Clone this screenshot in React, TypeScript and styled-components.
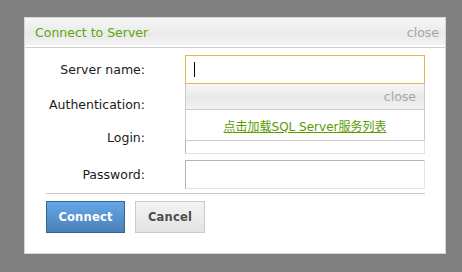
import React from "react";
import styled, { createGlobalStyle } from "styled-components";

const Global = createGlobalStyle`
  html, body { margin: 0; padding: 0; background: #808080; }
  body { font-family: "DejaVu Sans", Verdana, sans-serif; }
  * { box-sizing: border-box; }
`;

const Page = styled.div`
  width: 462px;
  height: 272px;
  padding: 17px 0 0 24px;
  background: #808080;
`;

const Dialog = styled.div`
  width: 422px;
  height: 237px;
  background: #fff;
  border: 1px solid #d6d6d6;
  display: flex;
  flex-direction: column;
`;

const Header = styled.div`
  height: 30px;
  display: flex;
  align-items: center;
  justify-content: space-between;
  padding: 0 6px 1px 10px;
  background: linear-gradient(#f6f6f6 0%, #eaeaea 55%, #f4f4f4 100%);
  box-shadow: inset 0 -2px 0 #fff;
  border-bottom: 1px solid #cdcdcd;
`;

const Title = styled.span`
  color: #5ea60c;
  font-size: 12.5px;
`;

const CloseText = styled.span`
  color: #a6a6a6;
  font-size: 12.5px;
`;

const Body = styled.div`
  padding: 7px 19px 0 21px;
  display: flex;
  flex-direction: column;
`;

const Form = styled.div`
  display: grid;
  grid-template-columns: 99px 240px;
  column-gap: 40px;
  row-gap: 6px;
  align-items: center;
`;

const Label = styled.div<{ $raised?: boolean }>`
  text-align: right;
  font-size: 12.5px;
  color: #1a1a1a;
  margin-bottom: ${(p) => (p.$raised ? "5px" : "0")};
`;

const Field = styled.div<{ $focused?: boolean }>`
  position: relative;
  height: 29px;
  display: flex;
  align-items: center;
  padding-left: 8px;
  background: #fff;
  border: 1px solid;
  border-color: ${(p) =>
    p.$focused ? "#e6b457" : "#b4b4b4 #e4e4e4 #e4e4e4 #b4b4b4"};
`;

const Caret = styled.span`
  display: block;
  width: 1px;
  height: 15px;
  background: #000;
`;

const Popup = styled.div`
  position: absolute;
  top: 28px;
  left: -1px;
  width: 240px;
  border: 1px solid #cacaca;
  border-top: none;
  background: #fff;
  z-index: 2;
`;

const PopupHeader = styled.div`
  height: 26px;
  display: flex;
  align-items: center;
  justify-content: flex-end;
  padding: 0 8px 0 0;
  background: linear-gradient(#f7f7f7 0%, #e9e9e9 55%, #f3f3f3 100%);
  border-bottom: 1px solid #cacaca;
`;

const PopupBody = styled.div`
  height: 30px;
  display: flex;
  align-items: center;
  justify-content: center;
`;

const LoadLink = styled.a`
  color: #5a9c00;
  font-size: 12px;
  font-family: "DejaVu Sans", "Noto Sans CJK SC", sans-serif;
  text-decoration: underline;
  cursor: pointer;
`;

const Separator = styled.div`
  height: 1px;
  background: #cbcbcb;
  margin: 4px 1px 0 0;
`;

const Buttons = styled.div`
  display: flex;
  gap: 10px;
  margin-top: 7px;
`;

const Button = styled.button<{ $primary?: boolean }>`
  height: 32px;
  width: ${(p) => (p.$primary ? "79px" : "70px")};
  font-family: "DejaVu Sans", Verdana, sans-serif;
  font-size: 11.5px;
  font-weight: bold;
  padding: 0;
  border: 1px solid ${(p) => (p.$primary ? "#2f6b88" : "#cbcbcb")};
  color: ${(p) => (p.$primary ? "#fff" : "#4d4d4d")};
  background: ${(p) =>
    p.$primary
      ? "linear-gradient(#66a6e6, #4a80ba)"
      : "linear-gradient(#f3f3f3, #e3e3e3)"};
  letter-spacing: 0.2px;
`;

export default function App() {
  return (
    <>
      <Global />
      <Page>
        <Dialog>
          <Header>
            <Title>Connect to Server</Title>
            <CloseText>close</CloseText>
          </Header>
          <Body>
            <Form>
              <Label>Server name:</Label>
              <Field $focused>
                <Caret />
                <Popup>
                  <PopupHeader>
                    <CloseText>close</CloseText>
                  </PopupHeader>
                  <PopupBody>
                    <LoadLink>点击加载SQL Server服务列表</LoadLink>
                  </PopupBody>
                </Popup>
              </Field>
              <Label>Authentication:</Label>
              <Field />
              <Label $raised>Login:</Label>
              <Field />
              <Label>Password:</Label>
              <Field />
            </Form>
            <Separator />
            <Buttons>
              <Button $primary>Connect</Button>
              <Button>Cancel</Button>
            </Buttons>
          </Body>
        </Dialog>
      </Page>
    </>
  );
}
